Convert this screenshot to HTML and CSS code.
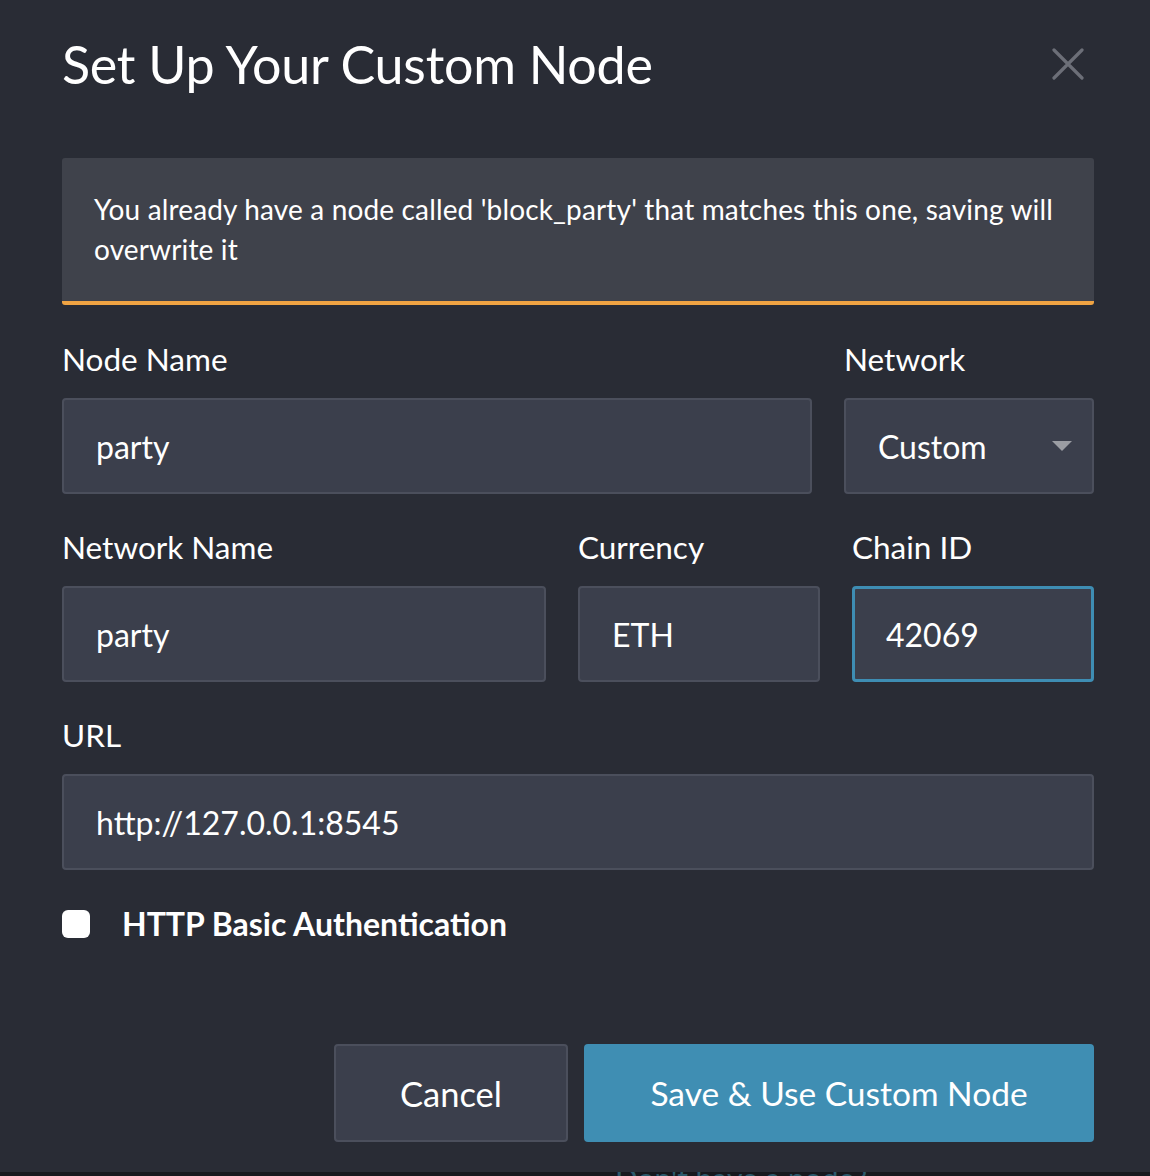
FILE: index.html
```html
<!DOCTYPE html>
<html lang="en">
<head>
<meta charset="utf-8">
<title>Set Up Your Custom Node</title>
<link rel="stylesheet" href="styles.css">
</head>
<body>
<div class="modal">
  <div class="modal-head">
    <h1 class="title">Set Up Your Custom Node</h1>
    <button class="close" aria-label="Close">
      <svg width="32" height="32" viewBox="0 0 32 32"><path d="M2 2 L30 30 M30 2 L2 30" stroke="#6c6f78" stroke-width="3.2" stroke-linecap="round"/></svg>
    </button>
  </div>

  <div class="alert">You already have a node called 'block_party' that matches this one, saving will overwrite it</div>

  <div class="row row-1">
    <div class="field">
      <label class="label">Node Name</label>
      <div class="input">party</div>
    </div>
    <div class="field">
      <label class="label">Network</label>
      <div class="input select">Custom<span class="caret"></span></div>
    </div>
  </div>

  <div class="row row-2">
    <div class="field">
      <label class="label">Network Name</label>
      <div class="input">party</div>
    </div>
    <div class="field">
      <label class="label">Currency</label>
      <div class="input">ETH</div>
    </div>
    <div class="field">
      <label class="label">Chain ID</label>
      <div class="input focus">42069</div>
    </div>
  </div>

  <div class="row">
    <div class="field">
      <label class="label">URL</label>
      <div class="input">http://127.0.0.1:8545</div>
    </div>
  </div>

  <div class="check">
    <span class="box"></span>
    <span class="check-label">HTTP Basic Authentication</span>
  </div>

  <div class="actions">
    <button class="btn btn-cancel">Cancel</button>
    <button class="btn btn-primary">Save &amp; Use Custom Node</button>
  </div>
</div>
<div class="under">Don't have a node?</div>
</body>
</html>
```

FILE: styles.css
```css
html, body {
  margin: 0;
  padding: 0;
  background: #17191e;
}
body {
  font-family: Lato, "Open Sans", sans-serif;
  color: #ffffff;
  width: 1150px;
  height: 1176px;
  overflow: hidden;
  position: relative;
}
.modal {
  background: #292c35;
  height: 1172px;
  box-sizing: border-box;
  padding: 32px 56px 0 62px;
  position: relative;
  z-index: 1;
}
.modal-head {
  display: flex;
  align-items: center;
  justify-content: space-between;
  height: 64px;
}
.title {
  margin: 0;
  font-weight: 400;
  font-size: 52px;
  line-height: 64px;
  letter-spacing: -0.25px;
}
.close {
  background: none;
  border: 0;
  padding: 0;
  width: 32px;
  height: 32px;
  margin-right: 10px;
  display: flex;
}
.alert {
  margin-top: 62px;
  background: #3f424b;
  border-bottom: 4px solid #f0a443;
  border-radius: 3px;
  padding: 31px 32px 32px 32px;
  font-size: 28px;
  line-height: 40px;
  letter-spacing: 0.15px;
}
.row {
  display: grid;
  gap: 32px;
  margin-top: 32px;
}
.row-1 { grid-template-columns: 750px 1fr; }
.row-2 { grid-template-columns: 484px 242px 1fr; }
.row-2, .row-2 + .row { margin-top: 31px; }
.field { display: flex; flex-direction: column; }
.label {
  font-size: 31.5px;
  line-height: 40px;
  padding-top: 2px;
  margin-bottom: 19px;
}
.input {
  height: 96px;
  box-sizing: border-box;
  background: #3b3f4c;
  border: 2px solid #4b4f5c;
  border-radius: 4px;
  padding: 0 32px;
  display: flex;
  align-items: center;
  font-size: 32px;
}
.input.focus {
  border: 3px solid #3e8db3;
  padding-left: 31px;
}
.select { justify-content: space-between; }
.caret {
  width: 0;
  height: 0;
  border-left: 10px solid transparent;
  border-right: 10px solid transparent;
  border-top: 10px solid #9b9da3;
  margin-right: -12px;
}
.check {
  display: flex;
  align-items: center;
  gap: 32px;
  margin-top: 34px;
}
.box {
  width: 28px;
  height: 28px;
  background: #ffffff;
  border-radius: 6px;
}
.check-label {
  font-weight: 700;
  font-size: 32px;
  line-height: 40px;
}
.actions {
  display: flex;
  justify-content: flex-end;
  gap: 16px;
  margin-top: 100px;
}
.btn {
  height: 98px;
  border-radius: 4px;
  font-family: Lato, sans-serif;
  font-size: 34.5px;
  color: #ffffff;
  letter-spacing: 0;
}
.btn-cancel {
  width: 234px;
  background: #3b3f4c;
  border: 2px solid #4b4f5c;
}
.btn-primary {
  width: 510px;
  background: #3f8eb3;
  border: 0;
  font-size: 33.5px;
}
.under {
  position: absolute;
  top: 1160px;
  left: 615px;
  font-size: 30px;
  line-height: 36px;
  color: #2c5a6c;
  z-index: 0;
}
```
